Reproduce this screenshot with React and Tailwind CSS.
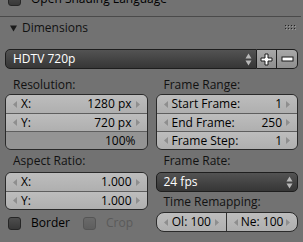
import React from "react";

const font = { fontFamily: '"Open Sans", "DejaVu Sans", sans-serif' };

function ArrowL() {
  return (
    <svg width="4" height="7" viewBox="0 0 4 7" className="shrink-0">
      <path d="M4 0 L0 3.5 L4 7 Z" fill="#8e8e8e" />
    </svg>
  );
}

function ArrowR() {
  return (
    <svg width="4" height="7" viewBox="0 0 4 7" className="shrink-0">
      <path d="M0 0 L4 3.5 L0 7 Z" fill="#8e8e8e" />
    </svg>
  );
}

function UpDown() {
  return (
    <svg width="7" height="13" viewBox="0 0 7 13" className="shrink-0">
      <path d="M3.5 0.5 L6.5 5.5 L0.5 5.5 Z" fill="#b8b8b8" />
      <path d="M0.5 7.5 L6.5 7.5 L3.5 12.5 Z" fill="#b8b8b8" />
    </svg>
  );
}

function NumRow({ label, value, first, slider }) {
  return (
    <div
      className={
        "h-[18px] flex items-center pl-[7px] pr-[7px] text-[12px] text-black " +
        (first ? "" : "border-t border-[#5e5e5e] ") +
        (slider ? "bg-[#949494]" : "bg-gradient-to-b from-[#bdbdbd] to-[#afafaf]")
      }
    >
      {slider ? (
        <span className="ml-auto mr-[4px]">{value}</span>
      ) : (
        <>
          <ArrowL />
          <span className="ml-[4px]">{label}</span>
          <span className="ml-auto mr-[4px]">{value}</span>
          <ArrowR />
        </>
      )}
    </div>
  );
}

function Box({ children }) {
  return (
    <div className="border border-[#2a2a2a] rounded-[6px] overflow-hidden">
      {children}
    </div>
  );
}

function Label({ children, h = "h-[18px]" }) {
  return (
    <div className={h + " flex items-center pl-[8px] text-[12px] text-[#111]"}>
      {children}
    </div>
  );
}

function Check({ disabled }) {
  return (
    <div
      className={
        "w-[13px] h-[13px] shrink-0 rounded-[3px] border " +
        (disabled
          ? "border-[#555] bg-gradient-to-b from-[#6a6a6a] to-[#5e5e5e]"
          : "border-[#262626] bg-gradient-to-b from-[#4e4e4e] to-[#383838]")
      }
    />
  );
}

export default function App() {
  return (
    <div
      className="w-[303px] h-[242px] bg-[#727272] overflow-hidden select-none"
      style={font}
    >
      <div className="mt-[-11px] h-[20px] flex items-center pl-[8px] gap-[10px] text-[12px] text-black">
        <Check />
        <span>Open Shading Language</span>
      </div>

      <div className="mt-[7px] h-px w-[301px] bg-[#4a4a4a]" />

      <div className="mt-[1px] h-[20px] flex items-center pl-[10px] pr-[7px] text-[12px] text-[#111]">
        <svg width="7" height="7" viewBox="0 0 7 7">
          <path d="M0 0.5 L7 0.5 L3.5 6.5 Z" fill="#1a1a1a" />
        </svg>
        <span className="ml-[5px]">Dimensions</span>
        <svg width="11" height="6" viewBox="0 0 11 6" className="ml-auto">
          {[0, 3, 6, 9].map((x) =>
            [0, 3].map((y) => (
              <g key={x + "-" + y}>
                <rect x={x} y={y} width="1" height="1" fill="#222" />
                <rect x={x + 1} y={y + 1} width="1" height="1" fill="#9a9a9a" />
              </g>
            ))
          )}
        </svg>
      </div>

      <div className="mt-[11px] mx-[5px] h-[20px] flex text-[12px]">
        <div className="flex-1 flex items-center pl-[7px] pr-[4px] rounded-l-[5px] border border-[#1e1e1e] bg-gradient-to-b from-[#535353] to-[#363636] text-white">
          <span>HDTV 720p</span>
          <span className="ml-auto">
            <UpDown />
          </span>
        </div>
        <div className="w-[20px] flex items-center justify-center border-y border-r border-[#1e1e1e] bg-gradient-to-b from-[#a8a8a8] to-[#8e8e8e]">
          <svg width="13" height="13" viewBox="0 0 13 13">
            <path
              d="M5 1 H8 V5 H12 V8 H8 V12 H5 V8 H1 V5 H5 Z"
              fill="#fff"
              stroke="#1a1a1a"
              strokeWidth="1"
            />
          </svg>
        </div>
        <div className="w-[21px] flex items-center justify-center rounded-r-[5px] border-y border-r border-[#1e1e1e] bg-gradient-to-b from-[#a8a8a8] to-[#8e8e8e]">
          <svg width="13" height="6" viewBox="0 0 13 6">
            <rect x="1" y="1" width="11" height="4" fill="#fff" stroke="#1a1a1a" strokeWidth="1" />
          </svg>
        </div>
      </div>

      <div className="mt-[7px] mx-[5px] grid grid-cols-2 gap-x-[8px]">
        <div className="flex flex-col">
          <Label>Resolution:</Label>
          <Box>
            <NumRow first label="X:" value="1280 px" />
            <NumRow label="Y:" value="720 px" />
            <NumRow slider value="100%" />
          </Box>
          <Label h="h-[22px]">Aspect Ratio:</Label>
          <Box>
            <NumRow first label="X:" value="1.000" />
            <NumRow label="Y:" value="1.000" />
          </Box>
          <div className="h-[26px] flex items-center pl-[3px] text-[12px]">
            <Check />
            <span className="ml-[10px] w-[52px] text-black">Border</span>
            <Check disabled />
            <span className="ml-[10px] text-[#5a5a5a]">Crop</span>
          </div>
        </div>

        <div className="flex flex-col">
          <Label>Frame Range:</Label>
          <Box>
            <NumRow first label="Start Frame:" value="1" />
            <NumRow label="End Frame:" value="250" />
            <NumRow label="Frame Step:" value="1" />
          </Box>
          <Label h="h-[22px]">Frame Rate:</Label>
          <div className="h-[20px] flex items-center pl-[7px] pr-[4px] rounded-[5px] border border-[#1e1e1e] bg-gradient-to-b from-[#535353] to-[#363636] text-white text-[12px]">
            <span>24 fps</span>
            <span className="ml-auto">
              <UpDown />
            </span>
          </div>
          <Label h="h-[20px]">Time Remapping:</Label>
          <div className="h-[20px] flex rounded-[8px] border border-[#2a2a2a] overflow-hidden text-[12px] text-black bg-gradient-to-b from-[#bdbdbd] to-[#afafaf]">
            <div className="flex-1 flex items-center px-[7px]">
              <ArrowL />
              <span className="mx-auto">Ol: 100</span>
              <ArrowR />
            </div>
            <div className="flex-1 flex items-center px-[7px] border-l border-[#333]">
              <ArrowL />
              <span className="mx-auto">Ne: 100</span>
              <ArrowR />
            </div>
          </div>
        </div>
      </div>
    </div>
  );
}
